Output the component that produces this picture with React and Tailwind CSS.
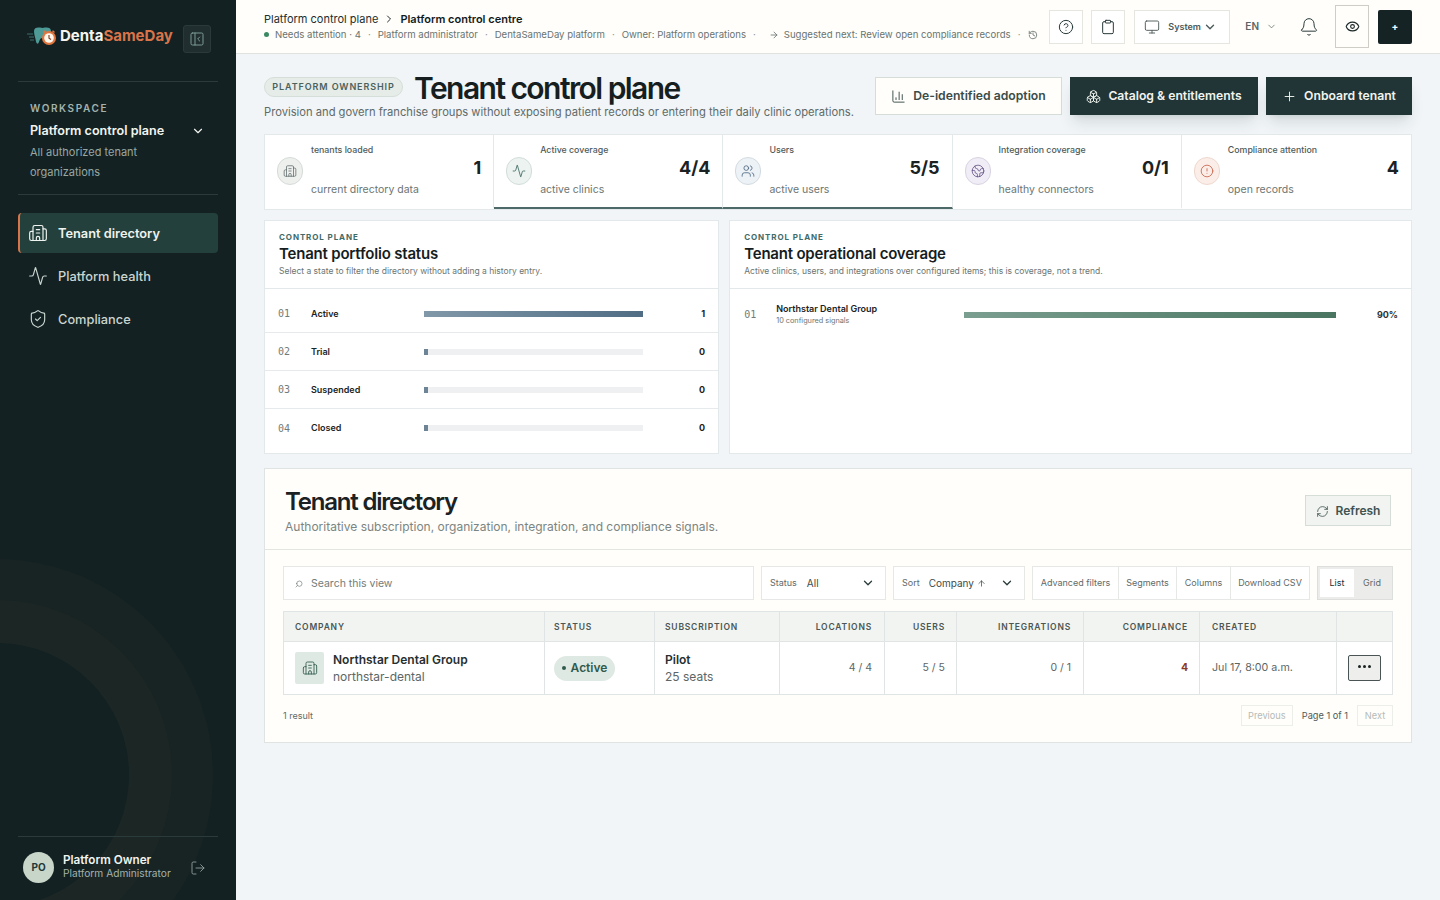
import React from 'react';
import {
  Activity, ArrowRight, ArrowUp, Bell, Boxes, Building2, ChartColumn, ChevronDown, ChevronRight, CircleAlert,
  CircleHelp, Clipboard, Earth, Eye, History, LogOut, Monitor, PanelLeftClose, Plus, RefreshCw, Search, ShieldCheck, Users,
} from 'lucide-react';

function Logo() {
  return (
    <svg width="30" height="24" viewBox="0 0 30 24" className="shrink-0">
      <path d="M0 9h6M2 12h5M3 15h4" stroke="#4f8f8c" strokeWidth="1" opacity="0.7" />
      <path d="M7 6c0-3 3-4 6-3.400 2 .4 3 .4 5 0 3-.6 6 .4 6 3.400 0 4-2 5-3 10-.5 2.500-2 3-3 1-.8-2-1-4-3-4s-2.500 3-3.500 5c-1 1.500-2 .5-2.500-1.500C8.300 12 7 10 7 6z" fill="#4d9a97" />
      <circle cx="22" cy="13" r="7" fill="#e0763f" />
      <circle cx="22" cy="13" r="4.800" fill="#fff8ef" />
      <path d="M22 10v3.200l2 1.300" stroke="#7c3a1d" strokeWidth="1.100" fill="none" />
      <path d="M16.500 7.500l2-1.800M27.500 7.500l-2-1.800" stroke="#e0763f" strokeWidth="1.500" />
    </svg>
  );
}

function NavItem({ icon: Icon, label, active }) {
  if (active) {
    return (
      <div className="flex h-10 items-center gap-[10px] rounded-[4px] border-l-2 border-[#d8754a] bg-[#24403c] pl-2 text-[12.800px] font-semibold text-[#eef3ef]">
        <Icon size={20} strokeWidth={1.4} />
        <span className="pt-[1px]">{label}</span>
      </div>
    );
  }
  return (
    <div className="flex h-10 items-center gap-[10px] pl-[10px] text-[12.800px] font-medium text-[#c9d5cf]">
      <Icon size={20} strokeWidth={1.4} />
      <span className="pt-[1px]">{label}</span>
    </div>
  );
}

function Sidebar() {
  return (
    <aside className="relative flex h-screen w-[236px] shrink-0 flex-col overflow-hidden bg-[#142123] px-[18px] pt-[25px]">
      <div className="absolute left-[-219px] top-[559px] h-[432px] w-[432px] rounded-full bg-[#172423]" />
      <div className="absolute left-[-178px] top-[600px] h-[350px] w-[350px] rounded-full bg-[#1c2725]" />
      <div className="absolute left-[-135px] top-[643px] h-[264px] w-[264px] rounded-full bg-[#132123]" />

      <div className="relative flex h-7 items-center pl-[9px]">
        <div className="flex items-center pb-[5px]">
          <Logo />
          <div className="ml-[3px] text-[15px] font-bold text-[#f5f5f0]">
            Denta<span className="text-[#d9744a]">SameDay</span>
          </div>
        </div>
        <div className="ml-[10px] flex h-7 w-7 items-center justify-center rounded-[3px] border border-[#2a3a3b] bg-[#202e30] text-[#7d9a94]">
          <PanelLeftClose size={16} strokeWidth={1.5} />
        </div>
      </div>

      <div className="relative mt-7 border-y border-[#2b3a3a] pb-3 pl-3 pt-5">
        <div className="text-[10px] font-semibold leading-3 tracking-[1.6px] text-[#a3b3ad]">WORKSPACE</div>
        <div className="mt-2 flex items-center justify-between pr-[13px] text-[12.600px] font-semibold leading-[18px] text-[#f1f4ef]">
          Platform control plane
          <ChevronDown size={14} strokeWidth={2} />
        </div>
        <div className="mt-[2px] text-[11px] leading-5 text-[#97a8a3]">
          All authorized tenant
          <br />
          organizations
        </div>
      </div>

      <nav className="relative mt-[18px] flex flex-col gap-[3px]">
        <NavItem icon={Building2} label="Tenant directory" active />
        <NavItem icon={Activity} label="Platform health" />
        <NavItem icon={ShieldCheck} label="Compliance" />
      </nav>

      <div className="relative mt-auto flex h-[64px] items-center border-t border-[#2b3a3a] pb-[2px] pl-[5px]">
        <div className="flex h-[31px] w-[31px] items-center justify-center rounded-full bg-[#c8d6c9] text-[10px] font-bold text-[#22393a]">PO</div>
        <div className="ml-[9px] flex-1 pb-[2px]">
          <div className="text-[11.700px] font-semibold leading-[14px] text-[#f2f4ef]">Platform Owner</div>
          <div className="text-[10.200px] leading-[13px] text-[#a3b2ad]">Platform Administrator</div>
        </div>
        <LogOut size={16} strokeWidth={1.3} className="mr-[12px] text-[#95a6a1]" />
      </div>
    </aside>
  );
}

function IconBox({ icon: Icon }) {
  return (
    <div className="flex h-[34px] w-[34px] items-center justify-center border border-[#e6e6e0] bg-white text-[#2a3a3b]">
      <Icon size={16} strokeWidth={1.5} />
    </div>
  );
}

function Dot() {
  return <span className="mx-[7px] text-[#8b9492]">·</span>;
}

function Topbar() {
  return (
    <header className="flex h-[54px] items-center border-b border-[#dfe2df] bg-[#fffefa] px-[28px]">
      <div className="flex-1">
        <div className="flex items-center text-[11px] leading-[14px] text-[#222e30]">
          Platform control plane
          <ChevronRight size={12} strokeWidth={2} className="mx-[5px]" />
          <span className="font-semibold text-[#111b1c]">Platform control centre</span>
        </div>
        <div className="mt-[2px] flex items-center text-[9.600px] leading-[14px] text-[#697472]">
          <span className="mr-[6px] h-[5px] w-[5px] rounded-full bg-[#3b8a63]" />
          Needs attention · 4
          <Dot />
          Platform administrator
          <Dot />
          DentaSameDay platform
          <Dot />
          Owner: Platform operations
          <Dot />
          <ArrowRight size={10} className="ml-[6px] mr-[5px]" />
          Suggested next: Review open compliance records
          <Dot />
          <History size={10} className="ml-[1px]" />
        </div>
      </div>
      <div className="flex items-center">
        <IconBox icon={CircleHelp} />
        <div className="ml-2"><IconBox icon={Clipboard} /></div>
        <div className="ml-[9px] flex h-[34px] w-[96px] items-center border border-[#e6e6e0] bg-white pl-[9px] text-[9px] font-semibold text-[#4e5a5a]">
          <Monitor size={16} strokeWidth={1.4} className="mr-[8px]" />
          System
          <ChevronDown size={14} strokeWidth={2.4} className="ml-[2px]" />
        </div>
        <div className="ml-[15px] flex items-center text-[10px] font-semibold text-[#5a6664]">
          EN
          <ChevronDown size={11} strokeWidth={1.6} className="ml-[7px]" />
        </div>
        <Bell size={20} strokeWidth={1.2} className="ml-[22px] text-[#2a3a3b]" />
        <div className="ml-[16px] flex h-[43px] w-[34px] items-center justify-center border border-[#cfcdc5] text-[#1a2728]">
          <Eye size={15} strokeWidth={1.8} />
        </div>
        <div className="ml-[9px] flex h-[34px] w-[34px] items-center justify-center rounded-[2px] bg-[#152325] text-[10px] font-bold text-white">+</div>
      </div>
    </header>
  );
}

const kpis = [
  { icon: Building2, label: 'tenants loaded', value: '1', sub: 'current directory data', ring: 'bg-[#eef0ee] border-[#d5dbd8] text-[#5d6a68]' },
  { icon: Activity, label: 'Active coverage', value: '4/4', sub: 'active clinics', ring: 'bg-[#ecf3f0] border-[#d2ddd9] text-[#2c5a52]', on: true },
  { icon: Users, label: 'Users', value: '5/5', sub: 'active users', ring: 'bg-[#edf2f6] border-[#d2dbe2] text-[#3d5b78]', on: true },
  { icon: Earth, label: 'Integration coverage', value: '0/1', sub: 'healthy connectors', ring: 'bg-[#f0edf6] border-[#d9d3e2] text-[#5d4a80]' },
  { icon: CircleAlert, label: 'Compliance attention', value: '4', sub: 'open records', ring: 'bg-[#fbeee8] border-[#eed8ce] text-[#c2553a]' },
];

function KpiCard({ icon: Icon, label, value, sub, ring, on, last }) {
  return (
    <div className={`flex h-[74px] items-center border-b-2 pl-3 pr-3 ${last ? '' : 'border-r border-r-[#e3e8ea]'} ${on ? 'border-b-[#4d6a68]' : 'border-b-transparent'}`}>
      <div className={`flex h-7 w-[26px] shrink-0 items-center justify-center rounded-full border ${ring}`}>
        <Icon size={14} strokeWidth={1.3} />
      </div>
      <div className="ml-2 flex h-full flex-1 flex-col justify-between pb-[11px] pt-[9px]">
        <div className="text-[8.800px] font-medium leading-[12px] text-[#4e5a5a]">{label}</div>
        <div className="text-[10.500px] leading-[13px] text-[#6b7573]">{sub}</div>
      </div>
      <div className="mb-[6px] text-[18px] font-bold leading-6 text-[#1a2223]">{value}</div>
    </div>
  );
}

function PanelHead({ title, text }) {
  return (
    <div className="h-[68px] border-b border-[#e3e8ea] px-[14px] pt-[11px]">
      <div className="text-[8px] font-bold leading-[10px] tracking-[0.9px] text-[#3f6b68]">CONTROL PLANE</div>
      <div className="mt-[2px] text-[15px] font-semibold leading-5 tracking-[-0.2px] text-[#151d1e]">{title}</div>
      <div className="mt-[1px] text-[8.500px] leading-[12px] text-[#6b7573]">{text}</div>
    </div>
  );
}

const statuses = [
  { n: '01', label: 'Active', value: '1', full: true },
  { n: '02', label: 'Trial', value: '0' },
  { n: '03', label: 'Suspended', value: '0' },
  { n: '04', label: 'Closed', value: '0' },
];

function StatusRow({ n, label, value, full, last }) {
  return (
    <div className={`flex h-[38px] items-center pl-[13px] pr-[13px] ${last ? '' : 'border-b border-[#e6eaec]'}`}>
      <div className="w-[33px] font-['DejaVu_Sans_Mono',monospace] text-[10px] text-[#727b7a]">{n}</div>
      <div className="w-[113px] text-[9px] font-semibold text-[#1c2425]">{label}</div>
      <div className="h-[6px] w-[219px] bg-[#eef0f2]">
        {full ? (
          <div className="h-full w-full bg-gradient-to-r from-[#8198a8] to-[#506d84]" />
        ) : (
          <div className="h-full w-1 bg-[#6d8496]" />
        )}
      </div>
      <div className="flex-1 text-right text-[9px] font-bold text-[#1c2425]">{value}</div>
    </div>
  );
}

function Panels() {
  return (
    <div className="mt-[10px] grid grid-cols-[2fr_3fr] gap-[10px]">
      <section className="h-[234px] border border-[#e3e8ea] bg-white">
        <PanelHead title="Tenant portfolio status" text="Select a state to filter the directory without adding a history entry." />
        <div className="pt-[6px]">
          {statuses.map((s, i) => (
            <StatusRow key={s.n} {...s} last={i === statuses.length - 1} />
          ))}
        </div>
      </section>
      <section className="h-[234px] border border-[#e3e8ea] bg-white">
        <PanelHead title="Tenant operational coverage" text="Active clinics, users, and integrations over configured items; this is coverage, not a trend." />
        <div className="flex items-center pl-[14px] pr-[13px] pt-[14px]">
          <div className="w-[32px] font-['DejaVu_Sans_Mono',monospace] text-[10px] text-[#727b7a]">01</div>
          <div className="w-[188px]">
            <div className="text-[9px] font-semibold leading-[12px] text-[#1c2425]">Northstar Dental Group</div>
            <div className="mt-[1px] text-[7.300px] leading-[10px] text-[#6b7573]">10 configured signals</div>
          </div>
          <div className="h-[6px] w-[372px] bg-gradient-to-r from-[#7a9e90] to-[#4a7561]" />
          <div className="flex-1 text-right text-[9px] font-bold text-[#2a3334]">90%</div>
        </div>
      </section>
    </div>
  );
}

function Toolbar() {
  return (
    <div className="flex h-[34px] items-stretch gap-[7px] text-[9px] text-[#5f6a69]">
      <div className="flex w-[471px] items-center border border-[#e6e8e6] bg-white pl-[11px] pt-[1px] text-[10.500px] text-[#727c7a]">
        <Search size={8} strokeWidth={2} className="mr-2 -scale-x-100" />
        Search this view
      </div>
      <div className="flex w-[125px] items-center border border-[#e6e8e6] bg-white pl-2 pr-[10px]">
        <span>Status</span>
        <span className="ml-[10px] flex-1 text-[10px] text-[#3f4a4a]">All</span>
        <ChevronDown size={14} strokeWidth={2.2} className="text-[#2a3a3b]" />
      </div>
      <div className="flex w-[132px] items-center border border-[#e6e8e6] bg-white pl-2 pr-[10px]">
        <span>Sort</span>
        <span className="ml-[9px] flex flex-1 items-center text-[10px] text-[#3f4a4a]">
          Company
          <ArrowUp size={9} className="ml-[3px]" />
        </span>
        <ChevronDown size={14} strokeWidth={2.2} className="text-[#2a3a3b]" />
      </div>
      <div className="flex w-[278px] items-stretch border border-[#e6e8e6] bg-white">
        <div className="flex w-[86px] items-center justify-center border-r border-[#e6e8e6]">Advanced filters</div>
        <div className="flex w-[58px] items-center justify-center border-r border-[#e6e8e6]">Segments</div>
        <div className="flex w-[54px] items-center justify-center border-r border-[#e6e8e6]">Columns</div>
        <div className="flex flex-1 items-center justify-center">Download CSV</div>
      </div>
      <div className="flex w-[76px] border border-[#dddfdc] bg-[#ececea] p-[2px]">
        <div className="flex w-[34px] items-center justify-center bg-white text-[#222e30]">List</div>
        <div className="flex flex-1 items-center justify-center">Grid</div>
      </div>
    </div>
  );
}

const th = 'h-[30px] border-r border-[#e0e4e4] pt-[1px] text-[8.500px] font-semibold tracking-[0.8px] text-[#4b5655]';
const td = 'border-r border-[#e0e4e4] text-[10.500px] text-[#5c6665]';

function TenantTable() {
  return (
    <table className="mt-[11px] w-[1109px] table-fixed border-collapse border border-[#e0e4e4] bg-white">
      <colgroup>
        <col className="w-[261px]" />
        <col className="w-[110px]" />
        <col className="w-[125px]" />
        <col className="w-[105px]" />
        <col className="w-[72px]" />
        <col className="w-[127px]" />
        <col className="w-[116px]" />
        <col className="w-[137px]" />
        <col className="w-[56px]" />
      </colgroup>
      <thead>
        <tr className="border-b border-[#e0e4e4] bg-[#f1f4f0]">
          <th className={`${th} px-[11px] text-left`}>COMPANY</th>
          <th className={`${th} px-[9px] text-left`}>STATUS</th>
          <th className={`${th} px-[10px] text-left`}>SUBSCRIPTION</th>
          <th className={`${th} px-3 text-right`}>LOCATIONS</th>
          <th className={`${th} px-[11px] text-right`}>USERS</th>
          <th className={`${th} px-3 text-right`}>INTEGRATIONS</th>
          <th className={`${th} px-[11px] text-right`}>COMPLIANCE</th>
          <th className={`${th} px-3 text-left`}>CREATED</th>
          <th className={th} />
        </tr>
      </thead>
      <tbody>
        <tr className="h-[53px]">
          <td className={`${td} px-[11px]`}>
            <div className="flex items-center">
              <div className="flex h-8 w-[29px] items-center justify-center rounded-[2px] bg-[#dfe9e3] text-[#2f5a4c]">
                <Building2 size={16} strokeWidth={1.3} />
              </div>
              <div className="ml-[9px]">
                <div className="text-[12px] font-semibold leading-[17px] text-[#263031]">Northstar Dental Group</div>
                <div className="text-[12px] leading-[17px] text-[#5c6665]">northstar-dental</div>
              </div>
            </div>
          </td>
          <td className={`${td} px-[9px]`}>
            <div className="inline-flex h-[25px] w-[61px] items-center justify-center rounded-full bg-[#dfe9e3] text-[12px] font-semibold text-[#2f5a4c]">
              <span className="mr-[5px] h-1 w-1 rounded-full bg-[#2f5a4c]" />
              Active
            </div>
          </td>
          <td className={`${td} px-[10px]`}>
            <div className="text-[12px] font-semibold leading-[17px] text-[#263031]">Pilot</div>
            <div className="text-[12px] leading-[17px]">25 seats</div>
          </td>
          <td className={`${td} px-3 text-right`}>4 / 4</td>
          <td className={`${td} px-[11px] text-right`}>5 / 5</td>
          <td className={`${td} px-3 text-right`}>0 / 1</td>
          <td className={`${td} px-[11px] text-right font-bold text-[#8a3a24]`}>4</td>
          <td className={`${td} px-3 text-[10.700px]`}>Jul 17, 8:00 a.m.</td>
          <td className="text-center">
            <div className="mx-auto flex h-[26px] w-[33px] items-center justify-center gap-[2px] rounded-[2px] border border-[#4a5455] bg-[#eeeeec] pb-[3px]">
              <span className="h-[3px] w-[3px] rounded-full bg-[#1a2223]" />
              <span className="h-[3px] w-[3px] rounded-full bg-[#1a2223]" />
              <span className="h-[3px] w-[3px] rounded-full bg-[#1a2223]" />
            </div>
          </td>
        </tr>
      </tbody>
    </table>
  );
}

function Directory() {
  return (
    <section className="mt-[14px] h-[275px] border border-[#dfe3e2] bg-[#fffefa]">
      <div className="flex h-[81px] items-center justify-between border-b border-[#e3e5e1] pl-5 pr-5">
        <div className="pt-[5px]">
          <h2 className="text-[24px] font-semibold leading-[28px] tracking-[-1.200px] text-[#1a2223]">Tenant directory</h2>
          <p className="mt-[3px] text-[12px] leading-4 text-[#7b8583]">Authoritative subscription, organization, integration, and compliance signals.</p>
        </div>
        <div className="mt-[3px] flex h-[31px] w-[86px] items-center justify-center border border-[#d6dcd8] bg-[#f1f4f0] pt-[1px] text-[12px] font-semibold text-[#3f5350]">
          <RefreshCw size={13} strokeWidth={1.5} className="mr-[7px]" />
          Refresh
        </div>
      </div>
      <div className="px-[18px] pt-4">
        <Toolbar />
        <TenantTable />
        <div className="mt-[10px] flex items-center justify-between">
          <span className="text-[9px] text-[#5f6a69]">1 result</span>
          <div className="flex items-center text-[9.200px]">
            <div className="flex h-[21px] w-[52px] items-center justify-center border border-[#eceeea] text-[#b5bbb8]">Previous</div>
            <span className="mx-[9px] text-[#4e5a5a]">Page 1 of 1</span>
            <div className="flex h-[21px] w-[36px] items-center justify-center border border-[#eceeea] text-[#b5bbb8]">Next</div>
          </div>
        </div>
      </div>
    </section>
  );
}

export default function App() {
  return (
    <div className="flex h-screen overflow-hidden bg-[#f1f5f7] font-['Inter',sans-serif]">
      <Sidebar />
      <main className="min-w-0 flex-1">
        <Topbar />
        <div className="px-[28px] pt-[19px]">
          <div className="flex items-start justify-between">
            <div>
              <div className="flex items-center">
                <span className="mb-[2px] flex h-5 w-[139px] items-center justify-center rounded-full border border-[#d5ded9] bg-[#e6ece8] text-[9px] font-semibold tracking-[0.9px] text-[#4a625d]">PLATFORM OWNERSHIP</span>
                <h1 className="ml-[11px] text-[30px] font-semibold leading-[30px] tracking-[-1.550px] text-[#161e1f]">Tenant control plane</h1>
              </div>
              <p className="text-[11.200px] leading-[18px] text-[#5f6a69]">Provision and govern franchise groups without exposing patient records or entering their daily clinic operations.</p>
            </div>
            <div className="mt-1 flex gap-2 text-[12.200px] font-semibold">
              <div className="flex h-[38px] w-[187px] items-center justify-center border border-[#d6dcd8] bg-[#fffefa] text-[#3a4c4a]">
                <ChartColumn size={15} strokeWidth={1.5} className="mr-[7px]" />
                De-identified adoption
              </div>
              <div className="flex h-[38px] w-[188px] items-center justify-center bg-[#213536] text-[#f1f4ef] shadow-lg shadow-[#21353622]">
                <Boxes size={15} strokeWidth={1.5} className="mr-[7px]" />
                Catalog & entitlements
              </div>
              <div className="flex h-[38px] w-[146px] items-center justify-center bg-[#213536] text-[#f1f4ef] shadow-lg shadow-[#21353622]">
                <Plus size={15} strokeWidth={1.5} className="mr-[7px]" />
                Onboard tenant
              </div>
            </div>
          </div>

          <div className="mt-[13px] grid grid-cols-5 border border-[#e3e8ea] bg-white">
            {kpis.map((k, i) => (
              <KpiCard key={k.label} {...k} last={i === kpis.length - 1} />
            ))}
          </div>

          <Panels />
          <Directory />
        </div>
      </main>
    </div>
  );
}
